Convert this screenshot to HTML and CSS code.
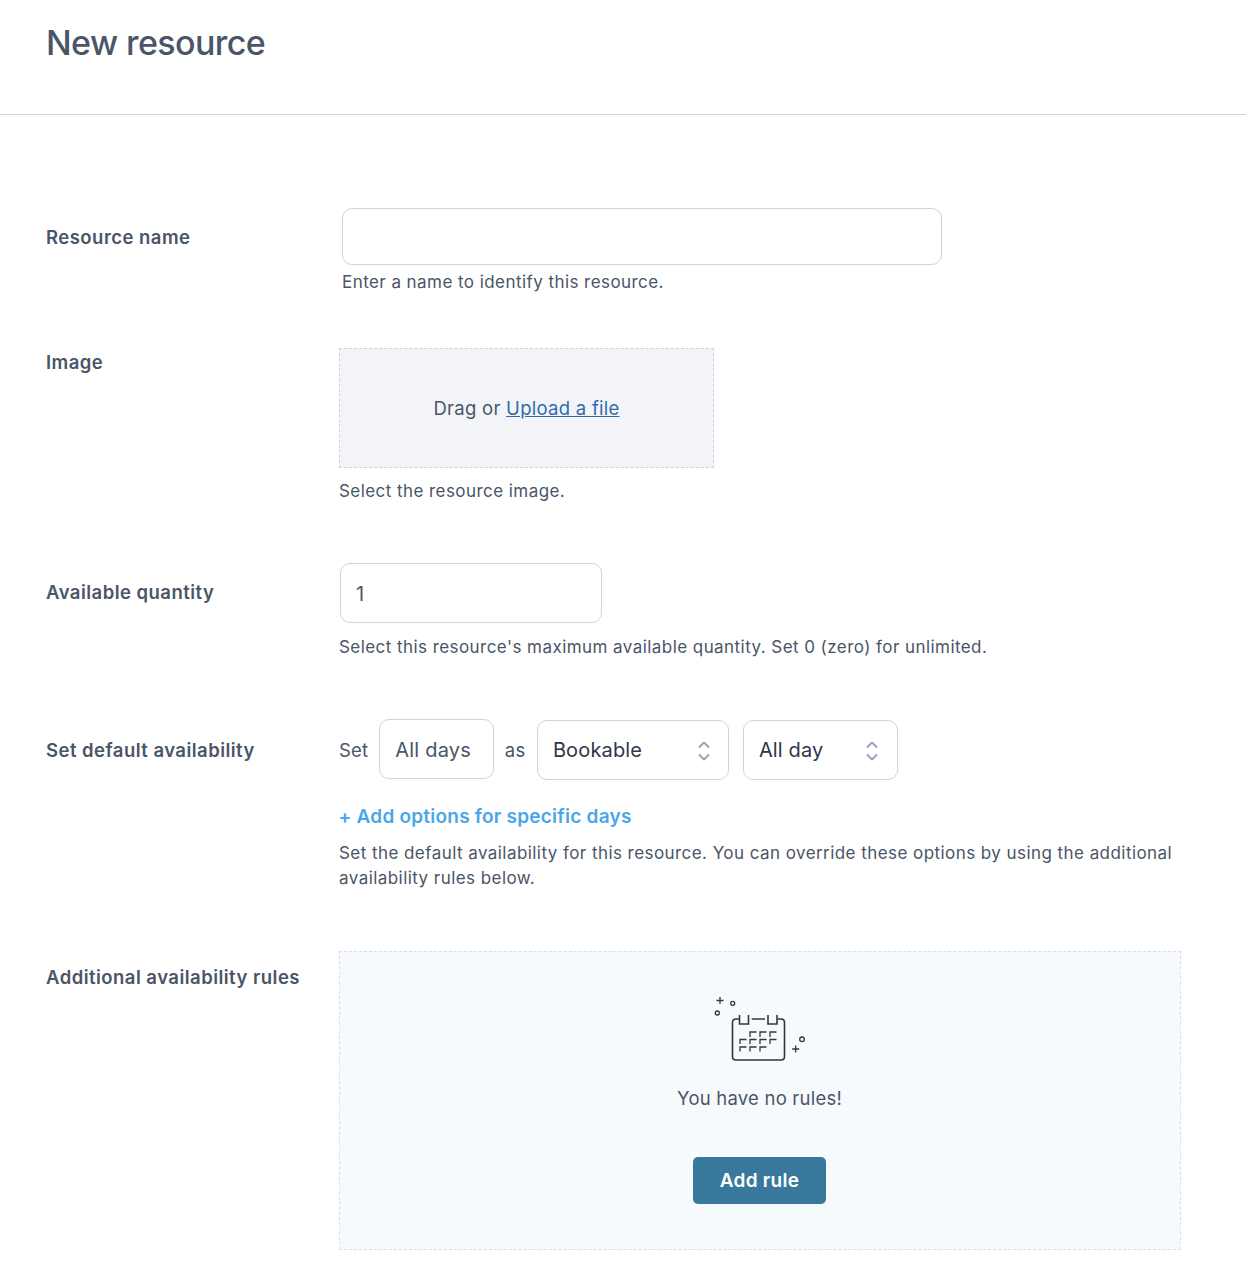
FILE: index.html
```html
<!DOCTYPE html>
<html lang="en">
<head>
<meta charset="utf-8">
<title>New resource</title>
<link rel="stylesheet" href="styles.css">
</head>
<body>
<header class="page-header"><h1>New resource</h1></header>
<main class="form">
  <section class="row row-name">
    <div class="label">Resource name</div>
    <div class="field">
      <input class="input input-name" type="text" aria-label="Resource name">
      <p class="help help-name">Enter a name to identify this resource.</p>
    </div>
  </section>
  <section class="row row-image">
    <div class="label">Image</div>
    <div class="field">
      <div class="drop">Drag or&nbsp;<a href="#">Upload a file</a></div>
      <p class="help help-image">Select the resource image.</p>
    </div>
  </section>
  <section class="row row-qty">
    <div class="label">Available quantity</div>
    <div class="field">
      <div class="input input-qty">1</div>
      <p class="help help-qty">Select this resource's maximum available quantity. Set 0 (zero) for unlimited.</p>
    </div>
  </section>
  <section class="row row-default">
    <div class="label">Set default availability</div>
    <div class="field">
      <div class="inline">
        <span class="word">Set</span>
        <div class="input input-days">All days</div>
        <span class="word word-as">as</span>
        <div class="input select select-book">Bookable
          <svg class="chev" viewBox="0 0 14 22" aria-hidden="true"><path d="M2 7.5 7 2.5 12 7.5M2 14.5 7 19.5 12 14.5"/></svg>
        </div>
        <div class="input select select-day">All day
          <svg class="chev" viewBox="0 0 14 22" aria-hidden="true"><path d="M2 7.5 7 2.5 12 7.5M2 14.5 7 19.5 12 14.5"/></svg>
        </div>
      </div>
      <a class="add-link" href="#">+ Add options for specific days</a>
      <p class="help help-default">Set the default availability for this resource. You can override these options by using the additional availability rules below.</p>
    </div>
  </section>
  <section class="row row-rules">
    <div class="label">Additional availability rules</div>
    <div class="field">
      <div class="empty">
        <svg class="empty-icon" viewBox="0 0 100 80" aria-hidden="true">
          <path class="thin" d="M10 7V14M6.500 10.500H13.500M85.700 55.500V62.500M82.200 59H89.200"/>
          <circle class="thin" cx="22.700" cy="13.300" r="2"/>
          <circle class="thin" cx="7.300" cy="23" r="2"/>
          <circle class="thin" cx="92" cy="49.300" r="2.300"/>
          <path d="M29 29H26Q22.500 29 22.500 32.500V66.500Q22.500 70 26 70H71Q74.500 70 74.500 66.500V32.500Q74.500 29 71 29H67.700M41.700 29H55"/>
          <path d="M29.500 25V34H38.500V25M58 25V34H67V25"/>
          <path class="thin" d="M46.500 42H40V47M56.500 42H50V47M66.500 42H60V47M36.500 49.500H30V54M46.500 49.500H40V54M56.500 49.500H50V54M66.500 49.500H60V54M36.500 57H30V61.500M46.500 57H40V61.500M56.500 57H50V61.500"/>
        </svg>
        <p class="empty-text">You have no rules!</p>
        <button class="btn" type="button">Add rule</button>
      </div>
    </div>
  </section>
</main>
</body>
</html>
```
FILE: styles.css
```css
* { box-sizing: border-box; }
html, body { margin: 0; padding: 0; }
body {
  background: #fff;
  color: #4a5568;
  font-family: Inter, "Liberation Sans", sans-serif;
  font-size: 18px;
}
.page-header {
  height: 115px;
  border-bottom: 1px solid #cbd5e0;
  padding: 20px 46px 0;
}
h1 {
  margin: 0;
  font-size: 34px;
  line-height: 46px;
  font-weight: 500;
  letter-spacing: -0.6px;
  color: #4a5568;
}
.form { padding: 93px 65px 0 46px; }
.row { display: grid; grid-template-columns: 293px 1fr; }
.label {
  font-size: 18.500px;
  font-weight: 600;
  line-height: 24px;
  letter-spacing: 0.47px;
  color: #4a5568;
}
.field { min-width: 0; }
.help {
  margin: 0;
  font-size: 17px;
  line-height: 25px;
  letter-spacing: 0.44px;
  color: #4a5568;
}
.input {
  display: flex;
  align-items: center;
  background: #fff;
  border: 1px solid #cbd5e0;
  border-radius: 10px;
  color: #4a5568;
  font: inherit;
  font-size: 20px;
  letter-spacing: 0.2px;
  padding: 0 15px;
}
.row-name { height: 140px; }
.row-name .label { padding-top: 17px; }
.input-name { width: 600px; height: 57px; margin-left: 3px; display: block; }
.help-name { margin: 5px 0 0 3px; }
.row-image { height: 215px; }
.row-image .label { padding-top: 2px; }
.drop {
  width: 375px;
  height: 120px;
  display: flex;
  align-items: center;
  justify-content: center;
  background: #f2f4f8;
  border: 1px dashed #cbd5e0;
  font-size: 18.500px;
  letter-spacing: 0.27px;
}
.drop a { color: #2f6cad; }
.help-image { margin-top: 11px; }
.row-qty { height: 156px; }
.row-qty .label { padding-top: 17px; }
.input-qty { width: 262px; height: 60px; margin-left: 1px; padding-top: 2px; }
.help-qty { margin-top: 12px; }
.row-default { height: 232px; }
.row-default .label { padding-top: 19px; }
.inline { display: flex; align-items: center; height: 61px; }
.word { font-size: 18.500px; letter-spacing: 0.2px; }
.input-days { width: 115px; height: 60px; margin: 0 0 2px 11px; padding-top: 2px; }
.word-as { margin-left: 10.500px; }
.select {
  position: relative;
  height: 60px;
  padding-left: 14.500px;
  color: #2d3748;
  letter-spacing: 0.15px;
}
.select-book { width: 192px; margin-left: 12px; }
.select-day { width: 155px; margin-left: 14px; }
.chev {
  position: absolute;
  right: 17px;
  top: 19px;
  width: 14px;
  height: 22px;
  fill: none;
  stroke: #8fa0b8;
  stroke-width: 1.800;
}
.select-day .chev { right: 18px; }
.add-link {
  display: block;
  margin-top: 24px;
  margin-left: -0.500px;
  line-height: 25px;
  font-size: 19px;
  font-weight: 600;
  letter-spacing: 0.23px;
  color: #4aa6e8;
  text-decoration: none;
}
.help-default { margin-top: 12px; }
.row-rules .label { padding-top: 14px; }
.empty {
  height: 299px;
  width: 842px;
  display: flex;
  flex-direction: column;
  align-items: center;
  background: #f7fafc;
  border: 1px dashed #d8e0ea;
  padding-top: 38px;
}
.empty-icon {
  width: 100px;
  height: 80px;
  fill: none;
  stroke: #2d3748;
  stroke-width: 1.600;
}
.thin { stroke-width: 1.300; }
.empty-text { margin: 15px 1px 0 0; font-size: 18.500px; line-height: 26px; letter-spacing: 0.22px; }
.btn {
  margin: 46px 1px 0 0;
  width: 133px;
  height: 47px;
  border: 0;
  border-radius: 5px;
  background: #38789c;
  color: #fff;
  font: inherit;
  font-size: 19px;
  font-weight: 600;
  letter-spacing: 0.25px;
}
```
